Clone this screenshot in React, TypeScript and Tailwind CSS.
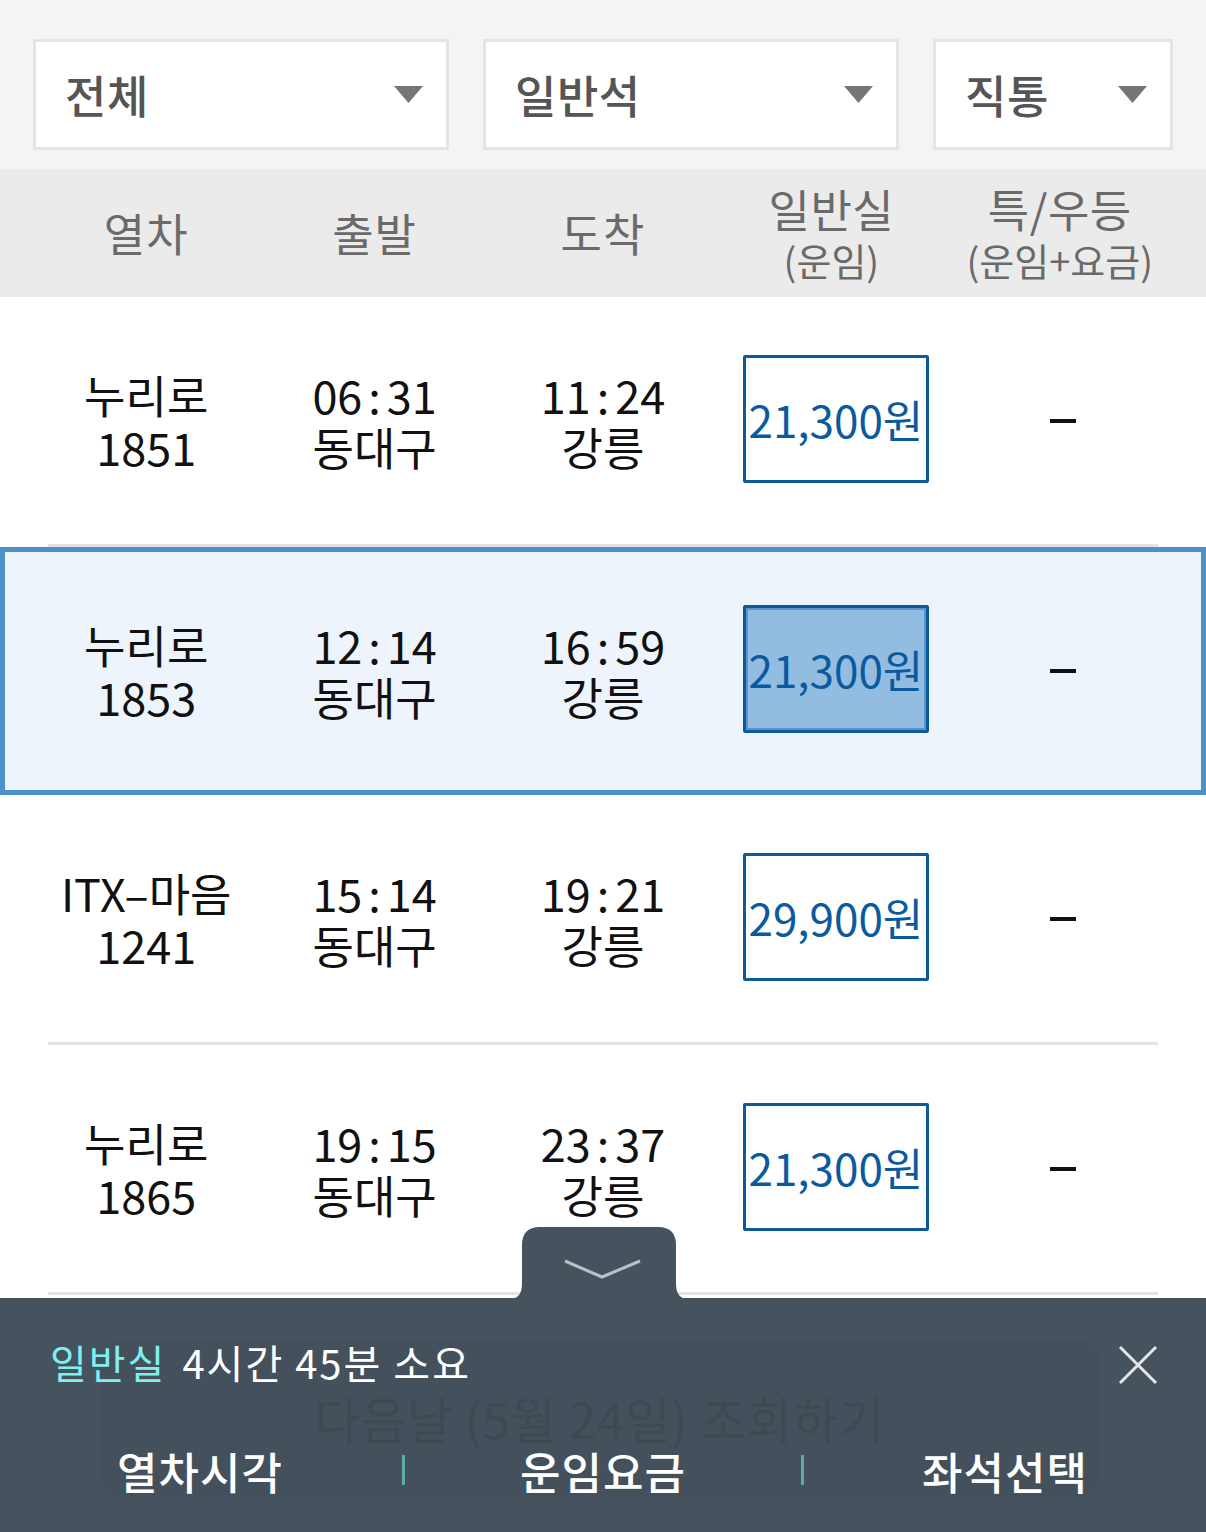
import React from "react";

const ROWS = [
  { name: "누리로", no: "1851", dep: "06:31", arr: "11:24", price: "21,300원" },
  { name: "누리로", no: "1853", dep: "12:14", arr: "16:59", price: "21,300원", selected: true },
  { name: "ITX–마음", no: "1241", dep: "15:14", arr: "19:21", price: "29,900원" },
  { name: "누리로", no: "1865", dep: "19:15", arr: "23:37", price: "21,300원" },
];

function Caret() {
  return (
    <svg width="29" height="17" viewBox="0 0 29 17" className="shrink-0">
      <polygon points="0,0 29,0 14.5,17" fill="#767676" />
    </svg>
  );
}

function Dropdown({ label, className }: { label: string; className: string }) {
  return (
    <div
      className={`h-[111px] bg-white border-[3px] border-[#e4e4e4] flex items-center justify-between pl-[29px] pr-[23px] ${className}`}
    >
      <span className="text-[45px] font-medium text-[#555] tracking-[0.5px]">{label}</span>
      <Caret />
    </div>
  );
}

// times get a wider colon, like the reference font
function Time({ value }: { value: string }) {
  const [h, m] = value.split(":");
  return (
    <span>
      {h}
      <span className="mx-[6px]">:</span>
      {m}
    </span>
  );
}

function Cell({ top, bottom }: { top: React.ReactNode; bottom: string }) {
  return (
    <div className="flex flex-col items-center text-[45px] leading-[52px] text-[#111]">
      <span>{top}</span>
      <span>{bottom}</span>
    </div>
  );
}

function TrainRow({ row }: { row: (typeof ROWS)[number] }) {
  const sel = !!row.selected;
  return (
    <div
      className={
        sel
          ? "h-[248px] border-[5px] border-[#4b92cb] bg-[#eef4fb] grid grid-cols-5 items-center px-[27px]"
          : "h-[247px] grid grid-cols-5 items-center px-[32px]"
      }
    >
      <Cell top={row.name} bottom={row.no} />
      <Cell top={<Time value={row.dep} />} bottom="동대구" />
      <Cell top={<Time value={row.arr} />} bottom="강릉" />
      <div className="flex justify-center -mt-[4px] pl-[9px]">
        <div
          className={
            sel
              ? "w-[186px] h-[128px] border-[3px] border-[#0b5a9c] bg-[#93bde0] shadow-[inset_0_0_0_2px_#5b93cc] flex items-center justify-center rounded-[2px]"
              : "w-[186px] h-[128px] border-[3px] border-[#0b5a9c] bg-white flex items-center justify-center rounded-[2px]"
          }
        >
          <span className="text-[44px] text-[#0b5a9e]">{row.price}</span>
        </div>
      </div>
      <div className="flex justify-center pl-[6px]">
        <span className="block w-[26px] h-[4px] bg-[#111]" />
      </div>
    </div>
  );
}

function Separator() {
  return <div className="mx-[48px] h-[3px] bg-[#e3e3e3]" />;
}

export default function App() {
  return (
    <div className="w-[1206px] h-[1532px] overflow-hidden bg-white font-['Noto_Sans_CJK_KR','Noto_Sans',sans-serif]">
      {/* filters */}
      <div className="h-[169px] bg-[#f4f4f4] flex gap-[34px] px-[33px] pt-[39px]">
        <Dropdown label="전체" className="w-[416px]" />
        <Dropdown label="일반석" className="w-[416px]" />
        <Dropdown label="직통" className="flex-1" />
      </div>

      {/* table header */}
      <div className="h-[128px] bg-[#ebebeb] grid grid-cols-5 items-center px-[32px] text-[#6a6a6a]">
        <div className="text-center text-[45px] tracking-[1px]">열차</div>
        <div className="text-center text-[45px] tracking-[1px]">출발</div>
        <div className="text-center text-[45px] tracking-[1px]">도착</div>
        <div className="flex flex-col items-center mt-[4px]">
          <span className="text-[45px] leading-[50px] tracking-[0.5px]">일반실</span>
          <span className="text-[38px] leading-[52px]">(운임)</span>
        </div>
        <div className="flex flex-col items-center mt-[4px]">
          <span className="text-[45px] leading-[50px] tracking-[0.5px]">특/우등</span>
          <span className="text-[38px] leading-[52px]">(운임+요금)</span>
        </div>
      </div>

      {/* rows */}
      <TrainRow row={ROWS[0]} />
      <Separator />
      <TrainRow row={ROWS[1]} />
      <TrainRow row={ROWS[2]} />
      <Separator />
      <TrainRow row={ROWS[3]} />
      <Separator />

      {/* bottom panel */}
      <div className="relative mt-[3px] h-[236px] bg-[#46535f]">
        <svg
          width="180"
          height="72"
          viewBox="0 0 180 72"
          className="absolute left-[509px] -top-[71px]"
        >
          <path
            d="M0 72 C 10 72, 13 66, 13 56 L 13 18 Q 13 0, 31 0 L 149 0 Q 167 0, 167 18 L 167 56 C 167 66, 170 72, 180 72 Z"
            fill="#46535f"
          />
          <polyline points="56,34 93,50 131,34" fill="none" stroke="#b9c0c7" strokeWidth="3" />
        </svg>

        <div className="absolute left-[100px] right-[106px] top-[41px] h-[158px] rounded-[22px] bg-[#44505c] flex items-center justify-center">
          <span className="text-[49px] text-[#3e4954] tracking-[1px]">다음날 (5월 24일) 조회하기</span>
        </div>

        <div className="relative flex items-center justify-between pl-[50px] pr-[48px] pt-[40px] h-[88px]">
          <div className="text-[40px] leading-[48px] flex gap-[16px] tracking-[2px]">
            <span className="text-[#7ff0f0]">일반실</span>
            <span className="text-white">4시간 45분 소요</span>
          </div>
          <svg width="40" height="40" viewBox="0 0 40 40" className="mt-[6px]">
            <line x1="2" y1="2" x2="38" y2="38" stroke="#e6e6e6" strokeWidth="3" />
            <line x1="38" y1="2" x2="2" y2="38" stroke="#e6e6e6" strokeWidth="3" />
          </svg>
        </div>

        <div className="relative mt-[61px] grid grid-cols-3 items-center text-white text-[44px] leading-[48px] font-medium tracking-[1px]">
          <div className="text-center pr-[2px]">열차시각</div>
          <div className="relative text-center">
            <span className="absolute left-0 top-[8px] w-[3px] h-[30px] bg-[#5eaaa8]" />
            운임요금
            <span className="absolute right-0 top-[8px] w-[3px] h-[30px] bg-[#5eaaa8]" />
          </div>
          <div className="text-center">좌석선택</div>
        </div>
      </div>
    </div>
  );
}
